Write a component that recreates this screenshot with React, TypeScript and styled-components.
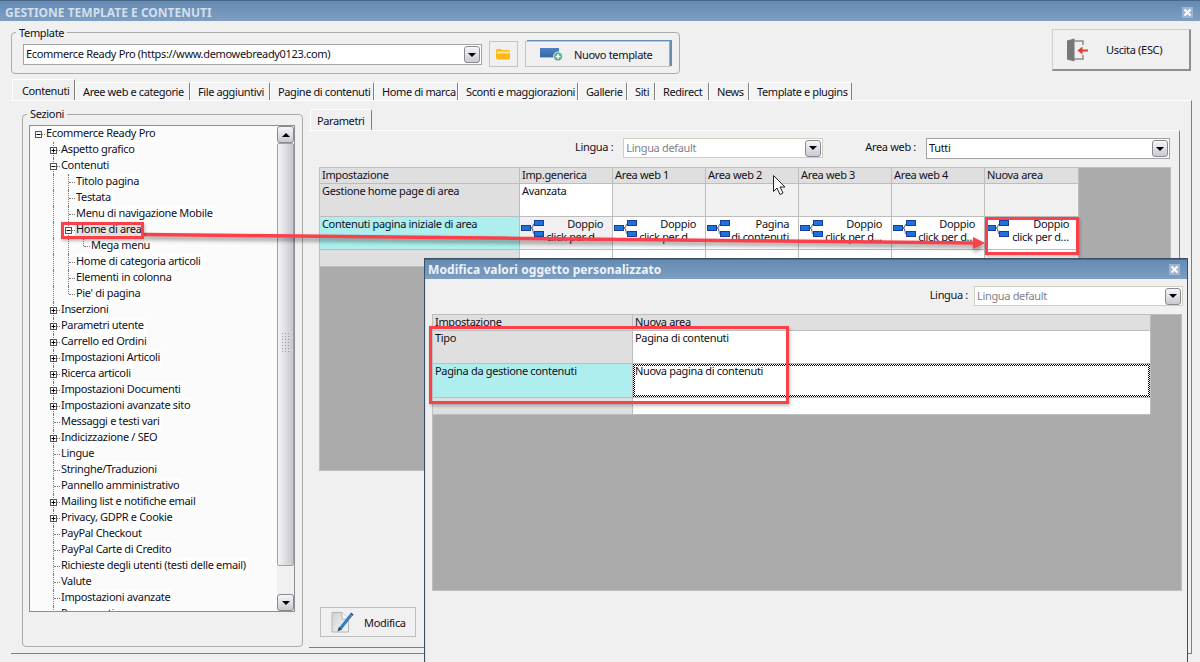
import React from 'react'
import styled, { createGlobalStyle } from 'styled-components'

const GlobalStyle = createGlobalStyle`
    html, body {
        margin: 0;
        padding: 0;
        background: #f0f0f0;
    }
    * {
        box-sizing: border-box;
    }
`

const Window = styled.div`
    position: relative;
    width: 1200px;
    height: 662px;
    overflow: hidden;
    display: flex;
    flex-direction: column;
    background: #f0f0f0;
    color: #10101c;
    font: 11px/13px "Noto Sans", Tahoma, sans-serif;
    letter-spacing: -0.33px;
`

const TitleBar = styled.div<{ $bright?: boolean }>`
    height: ${p => (p.$bright ? '20px' : '21px')};
    flex: none;
    display: flex;
    align-items: center;
    justify-content: space-between;
    padding: ${p => (p.$bright ? '0 7px 0 3px' : '3px 7px 0 5px')};
    border-top: 1px solid #49688a;
    background: linear-gradient(#658bb3, #7e9ec2);
    color: ${p => (p.$bright ? '#eef3f8' : '#d3dfeb')};
    font: bold 12px/16px "Noto Sans", Tahoma, sans-serif;
    letter-spacing: ${p => (p.$bright ? '0.08px' : '0')};
`

const CloseBox = styled.span`
    width: 11px;
    height: 11px;
    display: grid;
    place-items: center;
    background: #9db5d0;
    svg {
        display: block;
    }
`

const TopRow = styled.div`
    height: 58px;
    flex: none;
    display: flex;
    justify-content: space-between;
    padding: 5px 9px 0 11px;
`

const Group = styled.fieldset<{ $w: number; $h: number; $pad: number }>`
    width: ${p => p.$w}px;
    height: ${p => p.$h}px;
    margin: 0;
    min-width: 0;
    flex: none;
    border: 1px solid #ababab;
    border-radius: 4px;
    padding-left: ${p => p.$pad}px;
    legend {
        margin-left: ${p => 4 - p.$pad}px;
        padding: 0 3px;
        font-size: 11px;
        line-height: 13px;
    }
`

const TemplateGroup = styled(Group)`
    display: flex;
    align-items: flex-start;
    gap: 7px;
    padding-top: 2px;
    padding-right: 0;
    padding-bottom: 0;
`

const Combo = styled.div<{ $w: number; $off?: boolean }>`
    width: ${p => p.$w}px;
    height: ${p => (p.$off ? '20px' : '21px')};
    flex: none;
    display: flex;
    align-items: center;
    justify-content: space-between;
    padding: 0 1px 0 2px;
    line-height: 15px;
    background: #fff;
    border: 1px solid ${p => (p.$off ? '#cfcfc0' : '#a3a3a3')};
    color: ${p => (p.$off ? '#80808c' : 'inherit')};
`

const ComboText = styled.span`
    margin-top: -2px;
`

const ComboWrap = styled.div`
    padding-top: 3px;
`

const DropButton = styled.span`
    width: 16px;
    height: 17px;
    display: grid;
    place-items: center;
    border: 1px solid #8a8a90;
    border-radius: 3px;
    background: linear-gradient(#f6f6f8, #c9c9d2);
    &::before {
        content: '';
        border: 4px solid transparent;
        border-top: 4px solid #000;
        border-bottom: 0;
    }
`

const ToolButton = styled.button<{ $w: number; $h: number; $pad: number; $gap: number }>`
    width: ${p => p.$w}px;
    height: ${p => p.$h}px;
    flex: none;
    display: flex;
    align-items: center;
    gap: ${p => p.$gap}px;
    padding: 0 0 0 ${p => p.$pad}px;
    font: inherit;
    letter-spacing: inherit;
    color: inherit;
    background: #f0f0f0;
    border: 1px solid #c4c4c4;
    svg {
        display: block;
        flex: none;
    }
`

const NewButton = styled(ToolButton)`
    border-right: 1px solid #a8a8a8;
    box-shadow: 2px -1px 0 #6b8cb2;
`

const ExitButton = styled(ToolButton)`
    margin-top: 3px;
    border: 1px solid #cfcfcf;
    border-right: 2px solid #8d8d8d;
    border-bottom: 2px solid #8d8d8d;
`

const TabStrip = styled.div<{ $h: number; $left: number }>`
    height: ${p => p.$h}px;
    flex: none;
    display: flex;
    align-items: flex-end;
    padding-left: ${p => p.$left}px;
`

const Tab = styled.div<{ $w: number; $on?: boolean; $pad?: number }>`
    width: ${p => p.$w}px;
    height: ${p => (p.$on ? '21px' : '18px')};
    padding: ${p => (p.$on ? `4px 0 0 ${p.$pad}px` : '2px 0 0 7px')};
    white-space: nowrap;
    overflow: hidden;
    letter-spacing: -0.4px;
    background: ${p => (p.$on ? '#f0f0f0' : '#f4f4f4')};
    border-top: 1px solid #fff;
    border-left: 1px solid #fff;
    border-right: 1px solid #7f7f7f;
    border-radius: 2px 2px 0 0;
    position: relative;
    z-index: ${p => (p.$on ? 1 : 0)};
`

const TabBody = styled.div`
    width: 1181px;
    height: 554px;
    margin-left: 11px;
    flex: none;
    display: flex;
    gap: 6px;
    padding: 7px 0 0 11px;
    border-top: 1px solid #fff;
    border-right: 1px solid #7f7f7f;
    border-bottom: 1px solid #7f7f7f;
`

const SectionsGroup = styled(Group)`
    padding-top: 4px;
    padding-right: 0;
    padding-bottom: 0;
    legend {
        line-height: 12px;
        padding-bottom: 1px;
    }
`

const Tree = styled.div`
    width: 266px;
    height: 487px;
    display: flex;
    border: 1px solid #8e8e8e;
    background: #fbfbfb;
`

const TreeList = styled.div`
    flex: 1;
    min-width: 0;
    overflow: hidden;
`

const TreeRow = styled.div`
    height: 16px;
    display: flex;
    align-items: center;
`

const Slot = styled.span<{ $line?: 'full' | 'half' | 'none'; $branch?: boolean }>`
    position: relative;
    width: 15px;
    height: 16px;
    flex: none;
    display: grid;
    place-items: center;
    &::before {
        content: '';
        position: absolute;
        left: 8px;
        top: 0;
        display: ${p => (!p.$line || p.$line === 'none' ? 'none' : 'block')};
        height: ${p => (p.$line === 'half' ? '8px' : '16px')};
        border-left: 1px dotted #7a7a7a;
    }
    &::after {
        content: '';
        position: absolute;
        left: 9px;
        right: 0;
        top: 8px;
        display: ${p => (p.$branch ? 'block' : 'none')};
        border-top: 1px dotted #7a7a7a;
    }
    svg {
        position: relative;
        z-index: 1;
        margin-left: 1px;
    }
`

const TreeLabel = styled.span<{ $selected?: boolean }>`
    padding: 0 2px 0 1px;
    height: 16px;
    line-height: 14px;
    white-space: nowrap;
    background: ${p => (p.$selected ? '#e2e2e2' : '#fff')};
`

const ScrollColumn = styled.div`
    width: 17px;
    flex: none;
    display: flex;
    flex-direction: column;
    background: #f0f0f0;
`

const ScrollEnd = styled.span<{ $up?: boolean }>`
    height: 17px;
    flex: none;
    display: grid;
    place-items: center;
    border: 1px solid #8a8a90;
    border-radius: 3px;
    background: linear-gradient(#f6f6f8, #c9c9d2);
    &::before {
        content: '';
        border: 4px solid transparent;
        ${p => (p.$up ? 'border-bottom: 4px solid #000; border-top: 0;' : 'border-top: 4px solid #000; border-bottom: 0;')}
    }
`

const ScrollThumb = styled.div`
    height: 423px;
    flex: none;
    display: flex;
    align-items: center;
    justify-content: center;
    border: 1px solid #a0a0a6;
    border-radius: 2px;
    background: linear-gradient(90deg, #f4f4f6, #c6c6d0);
`

const ScrollGrip = styled.span`
    width: 9px;
    height: 22px;
    margin-top: -24px;
    background-image: radial-gradient(#9a9aa2 0.8px, transparent 1px);
    background-size: 3px 3px;
`

const ScrollTrack = styled.div`
    flex: 1;
`

const ParamPanel = styled.div`
    width: 871px;
    height: 537px;
    margin-top: 3px;
    flex: none;
    display: flex;
    flex-direction: column;
`

const PanelBody = styled.div`
    flex: 1;
    display: flex;
    flex-direction: column;
    padding: 7px 0 10px 10px;
    border-top: 1px solid #fff;
    border-right: 1px solid #7f7f7f;
    border-bottom: 1px solid #7f7f7f;
`

const FilterRow = styled.div<{ $pad: number; $h: number }>`
    height: ${p => p.$h}px;
    flex: none;
    display: flex;
    justify-content: flex-end;
    gap: 42px;
    padding-right: ${p => p.$pad}px;
`

const Field = styled.label<{ $gap: number }>`
    display: flex;
    align-items: flex-start;
    gap: ${p => p.$gap}px;
    line-height: 18px;
`

const GridFrame = styled.div<{ $w: number; $h: number }>`
    width: ${p => p.$w}px;
    height: ${p => p.$h}px;
    flex: none;
    background: #ababab;
    border: 1px solid #bfbfbf;
`

const Sheet = styled.div<{ $cols: string; $rows: string }>`
    display: inline-grid;
    grid-template-columns: ${p => p.$cols};
    grid-template-rows: ${p => p.$rows};
    gap: 1px;
    padding-right: 1px;
    padding-bottom: 1px;
    background: #bdbdbd;
    vertical-align: top;
`

const toneColors = {
    head: '#dfdfdf',
    accent: '#aeeeee',
    value: '#ffffff',
    off: '#f0f0f0'
}

const Cell = styled.div<{ $tone: keyof typeof toneColors }>`
    min-width: 0;
    overflow: hidden;
    padding: 0 2px;
    white-space: nowrap;
    background: ${p => toneColors[p.$tone]};
`

const FocusCell = styled(Cell)`
    position: relative;
    outline: 1px dotted #000;
    outline-offset: -1px;
    &::after {
        content: '';
        position: absolute;
        inset: 1px;
        border: 1px dotted #000;
    }
`

const NodeCell = styled(Cell)`
    display: flex;
    padding: 0 9px 0 1px;
    svg {
        flex: none;
        display: block;
        margin-top: 2px;
    }
`

const NodeText = styled.div`
    flex: 1;
    min-width: 0;
    text-align: right;
`

const ModifyButton = styled(ToolButton)`
    margin-top: auto;
    margin-left: 1px;
    border: 1px solid #bdbdbd;
`

const Dialog = styled.div`
    position: absolute;
    left: 424px;
    top: 258px;
    width: 764px;
    height: 404px;
    display: flex;
    flex-direction: column;
    background: #f0f0f0;
    border: 1px solid #3b5068;
    border-bottom: 0;
    box-shadow: inset 1px 0 0 #d6dfe8;
`

const DialogBody = styled.div`
    flex: 1;
    display: flex;
    flex-direction: column;
    padding: 7px 0 0 7px;
`

const Callout = styled.div<{ $l: number; $t: number; $w: number; $h: number }>`
    position: absolute;
    left: ${p => p.$l}px;
    top: ${p => p.$t}px;
    width: ${p => p.$w}px;
    height: ${p => p.$h}px;
    border: 3px solid #fb4049;
    box-shadow: 1px 2px 3px rgba(0, 0, 0, 0.25);
    pointer-events: none;
`

const Overlay = styled.svg`
    position: absolute;
    left: 0;
    top: 0;
    pointer-events: none;
`

const ArrowShape = styled.g`
    filter: drop-shadow(1px 3px 2px rgba(0, 0, 0, 0.45));
`

type NodeKind = 'plus' | 'minus' | 'leaf' | 'last'

type TreeItem = {
    label: string
    level: number
    kind: NodeKind
    selected?: boolean
}

const treeItems: TreeItem[] = [
    { label: 'Ecommerce Ready Pro', level: 0, kind: 'minus' },
    { label: 'Aspetto grafico', level: 1, kind: 'plus' },
    { label: 'Contenuti', level: 1, kind: 'minus' },
    { label: 'Titolo pagina', level: 2, kind: 'leaf' },
    { label: 'Testata', level: 2, kind: 'leaf' },
    { label: 'Menu di navigazione Mobile', level: 2, kind: 'leaf' },
    { label: 'Home di area', level: 2, kind: 'minus', selected: true },
    { label: 'Mega menu', level: 3, kind: 'last' },
    { label: 'Home di categoria articoli', level: 2, kind: 'leaf' },
    { label: 'Elementi in colonna', level: 2, kind: 'leaf' },
    { label: "Pie' di pagina", level: 2, kind: 'last' },
    { label: 'Inserzioni', level: 1, kind: 'plus' },
    { label: 'Parametri utente', level: 1, kind: 'plus' },
    { label: 'Carrello ed Ordini', level: 1, kind: 'plus' },
    { label: 'Impostazioni Articoli', level: 1, kind: 'plus' },
    { label: 'Ricerca articoli', level: 1, kind: 'plus' },
    { label: 'Impostazioni Documenti', level: 1, kind: 'plus' },
    { label: 'Impostazioni avanzate sito', level: 1, kind: 'plus' },
    { label: 'Messaggi e testi vari', level: 1, kind: 'leaf' },
    { label: 'Indicizzazione / SEO', level: 1, kind: 'plus' },
    { label: 'Lingue', level: 1, kind: 'leaf' },
    { label: 'Stringhe/Traduzioni', level: 1, kind: 'leaf' },
    { label: 'Pannello amministrativo', level: 1, kind: 'leaf' },
    { label: 'Mailing list e notifiche email', level: 1, kind: 'plus' },
    { label: 'Privacy, GDPR e Cookie', level: 1, kind: 'plus' },
    { label: 'PayPal Checkout', level: 1, kind: 'leaf' },
    { label: 'PayPal Carte di Credito', level: 1, kind: 'leaf' },
    { label: 'Richieste degli utenti (testi delle email)', level: 1, kind: 'leaf' },
    { label: 'Valute', level: 1, kind: 'leaf' },
    { label: 'Impostazioni avanzate', level: 1, kind: 'leaf' },
    { label: 'Pagamenti', level: 1, kind: 'leaf' }
]

const tabs = [
    { label: 'Contenuti', w: 63 },
    { label: 'Aree web e categorie', w: 115 },
    { label: 'File aggiuntivi', w: 80 },
    { label: 'Pagine di contenuti', w: 104 },
    { label: 'Home di marca', w: 84 },
    { label: 'Sconti e maggiorazioni', w: 120 },
    { label: 'Gallerie', w: 49 },
    { label: 'Siti', w: 28 },
    { label: 'Redirect', w: 54 },
    { label: 'News', w: 40 },
    { label: 'Template e plugins', w: 103 }
]

const Expander = ({ open }: { open: boolean }) => (
    <svg width="7" height="7" viewBox="0 0 7 7">
        <rect x="0.5" y="0.5" width="6" height="6" fill="#fff" stroke="#555" />
        <path d={open ? 'M1.5 3.5H5.5' : 'M1.5 3.5H5.5M3.5 1.5V5.5'} stroke="#000" />
    </svg>
)

const TreeNode = ({ item }: { item: TreeItem }) => {
    const guides = []
    for (let i = 1; i < item.level; i++) {
        guides.push(<Slot key={i} $line="full" />)
    }
    const hasBox = item.kind === 'plus' || item.kind === 'minus'
    const line = item.level === 0 ? 'none' : item.kind === 'last' ? 'half' : 'full'
    return (
        <TreeRow>
            {item.level > 0 && <Slot />}
            {guides}
            <Slot $line={line} $branch>
                {hasBox && <Expander open={item.kind === 'minus'} />}
            </Slot>
            <TreeLabel $selected={item.selected}>{item.label}</TreeLabel>
        </TreeRow>
    )
}

const CloseIcon = () => (
    <CloseBox>
        <svg width="9" height="9" viewBox="0 0 9 9">
            <path d="M1.5 1.5L7.5 7.5M7.5 1.5L1.5 7.5" stroke="#fff" strokeWidth="2" />
        </svg>
    </CloseBox>
)

const FolderIcon = () => (
    <svg width="16" height="12" viewBox="0 0 16 12">
        <path d="M1 2.5Q1 1 2.5 1H6L7 2H13.5Q15 2 15 3.5V10Q15 11.5 13.5 11.5H3Q1 11.5 1 9.5Z" fill="#fdb813" />
        <path d="M2 3.5H14.5V5.5H2Z" fill="#ffe9a0" />
    </svg>
)

const NewTemplateIcon = () => (
    <svg width="24" height="15" viewBox="0 0 24 15">
        <defs>
            <linearGradient id="newFill" x1="0" y1="0" x2="0" y2="1">
                <stop offset="0" stopColor="#4f82c4" />
                <stop offset="1" stopColor="#3566a8" />
            </linearGradient>
        </defs>
        <rect x="0" y="1" width="19" height="9" fill="url(#newFill)" />
        <path d="M0 10H15V11H0Z" fill="#b9b9b9" />
        <circle cx="18" cy="9.5" r="4.5" fill="#5aa78f" stroke="#dfeee8" />
        <path d="M15.5 9.5H20.5M18 7V12" stroke="#fff" strokeWidth="1.4" />
    </svg>
)

const ExitIcon = () => (
    <svg width="23" height="24" viewBox="0 0 23 24">
        <path d="M7 3H17V7M17 17V21H7" fill="none" stroke="#8d8d8d" strokeWidth="1.5" />
        <path d="M1 2.5L8.5 0.5V23.5L1 21.5Z" fill="#777" />
        <path d="M22 12.5H15" stroke="#d9432c" strokeWidth="2" />
        <path d="M16.5 8.5L11.5 12.5L16.5 16.5Z" fill="#d9432c" />
    </svg>
)

const EditIcon = () => (
    <svg width="23" height="22" viewBox="0 0 23 22">
        <defs>
            <linearGradient id="docFill" x1="0" y1="0" x2="1" y2="1">
                <stop offset="0" stopColor="#d2d2d2" />
                <stop offset="1" stopColor="#f6f6f6" />
            </linearGradient>
        </defs>
        <path d="M1 1.5H11L17.5 8V21H1Z" fill="url(#docFill)" stroke="#b4b4b4" />
        <path d="M11 1.5V8H17.5" fill="#fafafa" stroke="#b4b4b4" />
        <path d="M9 18L20 4" stroke="#3a7cc4" strokeWidth="3" />
        <path d="M6.5 20.5L7.8 16L10.8 18.4Z" fill="#24466e" />
        <path d="M19 3L20 1.5L22.5 3.5L21.5 5Z" fill="#1f4f88" />
    </svg>
)

const NodeIcon = () => (
    <svg width="24" height="20" viewBox="0 0 24 20">
        <path d="M10 9C13 9 11 4.5 14 4.5M10 9C13 9 11 15.5 14 15.5" fill="none" stroke="#4a5a70" />
        <rect x="0.5" y="6.5" width="9" height="5" fill="#1b74d6" stroke="#1a3aa0" />
        <rect x="13.5" y="1.5" width="9" height="5" fill="#1b74d6" stroke="#1a3aa0" />
        <rect x="13.5" y="12.5" width="9" height="5" fill="#1b74d6" stroke="#1a3aa0" />
    </svg>
)

type FilterProps = { label: string; value: string; w: number; off?: boolean; gap?: number }

const Filter = ({ label, value, w, off, gap = 10 }: FilterProps) => (
    <Field $gap={gap}>
        {label}
        <Combo $w={w} $off={off}>
            <ComboText>{value}</ComboText>
            <DropButton />
        </Combo>
    </Field>
)

const Node = ({ tone, lines }: { tone: 'value' | 'off'; lines: [string, string] }) => (
    <NodeCell $tone={tone}>
        <NodeIcon />
        <NodeText>
            {lines[0]}
            <br />
            {lines[1]}
        </NodeText>
    </NodeCell>
)

const areaHeads = ['Imp.generica', 'Area web 1', 'Area web 2', 'Area web 3', 'Area web 4', 'Nuova area']
const doubleClick: [string, string] = ['Doppio', 'click per d…']

export default function App() {
    return (
        <Window>
            <GlobalStyle />
            <TitleBar>
                GESTIONE TEMPLATE E CONTENUTI
                <CloseIcon />
            </TitleBar>

            <TopRow>
                <TemplateGroup $w={669} $h={48} $pad={11}>
                    <legend>Template</legend>
                    <ComboWrap>
                        <Combo $w={459}>
                            <ComboText>Ecommerce Ready Pro (https://www.demowebready0123.com)</ComboText>
                            <DropButton />
                        </Combo>
                    </ComboWrap>
                    <ToolButton $w={29} $h={26} $pad={5} $gap={0}>
                        <FolderIcon />
                    </ToolButton>
                    <NewButton $w={145} $h={26} $pad={14} $gap={10}>
                        <NewTemplateIcon />
                        Nuovo template
                    </NewButton>
                </TemplateGroup>
                <ExitButton $w={139} $h={42} $pad={13} $gap={17}>
                    <ExitIcon />
                    Uscita (ESC)
                </ExitButton>
            </TopRow>

            <TabStrip $h={21} $left={12}>
                {tabs.map((tab, i) => (
                    <Tab key={tab.label} $w={tab.w} $on={i === 0} $pad={9}>
                        {tab.label}
                    </Tab>
                ))}
            </TabStrip>

            <TabBody>
                <SectionsGroup $w={281} $h={539} $pad={6}>
                    <legend>Sezioni</legend>
                    <Tree>
                        <TreeList>
                            {treeItems.map(item => (
                                <TreeNode key={item.label} item={item} />
                            ))}
                        </TreeList>
                        <ScrollColumn>
                            <ScrollEnd $up />
                            <ScrollThumb>
                                <ScrollGrip />
                            </ScrollThumb>
                            <ScrollTrack />
                            <ScrollEnd />
                        </ScrollColumn>
                    </Tree>
                </SectionsGroup>

                <ParamPanel>
                    <TabStrip $h={19} $left={1}>
                        <Tab $w={62} $on $pad={6}>
                            Parametri
                        </Tab>
                    </TabStrip>
                    <PanelBody>
                        <FilterRow $pad={9} $h={29}>
                            <Filter label="Lingua :" value="Lingua default" w={200} off />
                            <Filter label="Area web :" value="Tutti" w={244} />
                        </FilterRow>
                        <GridFrame $w={852} $h={304}>
                            <Sheet
                                $cols="199px 92px 92px 92px 92px 92px 93px"
                                $rows="15px 32px 32px 16px"
                            >
                                <Cell $tone="head">Impostazione</Cell>
                                {areaHeads.map(head => (
                                    <Cell $tone="head" key={head}>
                                        {head}
                                    </Cell>
                                ))}

                                <Cell $tone="head">Gestione home page di area</Cell>
                                <Cell $tone="value">Avanzata</Cell>
                                <Cell $tone="off" />
                                <Cell $tone="off" />
                                <Cell $tone="off" />
                                <Cell $tone="off" />
                                <Cell $tone="off" />

                                <Cell $tone="accent">Contenuti pagina iniziale di area</Cell>
                                <Node tone="off" lines={doubleClick} />
                                <Node tone="value" lines={doubleClick} />
                                <Node tone="value" lines={['Pagina', 'di contenuti']} />
                                <Node tone="value" lines={doubleClick} />
                                <Node tone="value" lines={doubleClick} />
                                <Node tone="value" lines={doubleClick} />

                                <Cell $tone="head" />
                                <Cell $tone="value" />
                                <Cell $tone="value" />
                                <Cell $tone="value" />
                                <Cell $tone="value" />
                                <Cell $tone="value" />
                                <Cell $tone="value" />
                            </Sheet>
                        </GridFrame>
                        <ModifyButton $w={96} $h={30} $pad={10} $gap={10}>
                            <EditIcon />
                            Modifica
                        </ModifyButton>
                    </PanelBody>
                </ParamPanel>
            </TabBody>

            <Overlay width="1200" height="662" viewBox="0 0 1200 662">
                <ArrowShape>
                    <path d="M144 234.5L974 243" stroke="#fb4049" strokeWidth="3.5" fill="none" />
                    <path d="M973 237L985 243L973 249Z" fill="#fb4049" />
                </ArrowShape>
                <path
                    d="M773.5 175.5V191.5L777 188L780 194.5L783 193L780 187H785Z"
                    fill="#fff"
                    stroke="#222"
                />
            </Overlay>

            <Callout $l={61} $t={222} $w={83} $h={17} />
            <Callout $l={985} $t={217} $w={94} $h={38} />

            <Dialog>
                <TitleBar $bright>
                    Modifica valori oggetto personalizzato
                    <CloseIcon />
                </TitleBar>
                <DialogBody>
                    <FilterRow $pad={4} $h={28}>
                        <Filter label="Lingua :" value="Lingua default" w={209} off gap={6} />
                    </FilterRow>
                    <GridFrame $w={750} $h={277}>
                        <Sheet $cols="199px 517px" $rows="15px 32px 33px 16px">
                            <Cell $tone="head">Impostazione</Cell>
                            <Cell $tone="head">Nuova area</Cell>
                            <Cell $tone="head">Tipo</Cell>
                            <Cell $tone="value">Pagina di contenuti</Cell>
                            <Cell $tone="accent">Pagina da gestione contenuti</Cell>
                            <FocusCell $tone="value">Nuova pagina di contenuti</FocusCell>
                            <Cell $tone="head" />
                            <Cell $tone="value" />
                        </Sheet>
                    </GridFrame>
                </DialogBody>
            </Dialog>

            <Callout $l={429} $t={326} $w={360} $h={78} />
        </Window>
    )
}
